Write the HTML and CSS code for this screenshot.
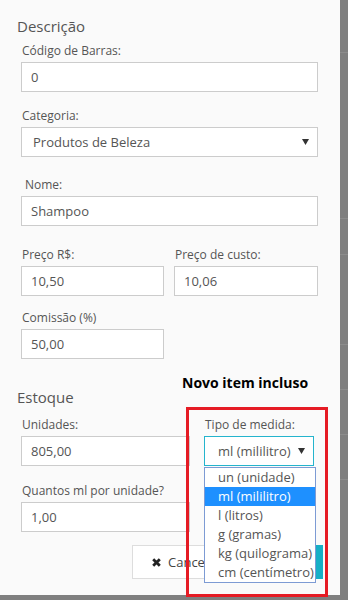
FILE: index.html
```html
<!DOCTYPE html>
<html lang="pt-BR">
  <head>
    <meta charset="UTF-8" />
    <meta name="viewport" content="width=device-width, initial-scale=1.0" />
    <title>Produto - Editar</title>
    <link rel="stylesheet" href="styles.css">
  </head>
  <body>
    <div class="screen">
      <div class="modal">
        <h4 class="section-title">Descrição</h4>

        <div class="field field-first">
          <label>Código de Barras:</label>
          <input class="input input-full" type="text" value="0" />
        </div>

        <div class="field">
          <label>Categoria:</label>
          <div class="select select-full">
            <span>Produtos de Beleza</span>
            <svg class="caret" width="7" height="6" viewBox="0 0 7 6"><path d="M0 0h7L3.5 6z" fill="#333"/></svg>
          </div>
        </div>

        <div class="field field-nome">
          <label class="label-indent">Nome:</label>
          <input class="input input-full" type="text" value="Shampoo" />
        </div>

        <div class="field field-precos">
          <div class="row-half">
            <div>
              <label>Preço R$:</label>
              <input class="input" type="text" value="10,50" />
            </div>
            <div>
              <label>Preço de custo:</label>
              <input class="input" type="text" value="10,06" />
            </div>
          </div>
        </div>

        <div class="field field-comissao">
          <div class="row-half">
            <div>
              <label>Comissão (%)</label>
              <input class="input" type="text" value="50,00" />
            </div>
          </div>
        </div>

        <h4 class="section-title section-estoque">Estoque</h4>

        <div class="field field-first field-estoque">
          <div class="row-stock">
            <div>
              <label>Unidades:</label>
              <input class="input" type="text" value="805,00" />
            </div>
            <div>
              <label>Tipo de medida:</label>
              <div class="select select-focus">
                <span>ml (mililitro)</span>
                <svg class="caret" width="7" height="6" viewBox="0 0 7 6"><path d="M0 0h7L3.5 6z" fill="#333"/></svg>
              </div>
            </div>
          </div>
        </div>

        <div class="field field-quantos">
          <div class="row-stock">
            <div>
              <label>Quantos ml por unidade?</label>
              <input class="input" type="text" value="1,00" />
            </div>
          </div>
        </div>

        <div class="actions">
          <button class="btn btn-cancel">
            <svg class="btn-icon" width="9" height="9" viewBox="0 0 9 9"><path d="M1.2 1.2l6.6 6.6M7.8 1.2L1.2 7.8" stroke="#222" stroke-width="2.8" stroke-linecap="butt"/></svg>
            <span>Cancelar</span>
          </button>
          <!-- texto do botão fica escondido atrás da lista aberta -->
          <button class="btn btn-save" title="Salvar"></button>
        </div>
      </div>

      <div class="backdrop">
        <div class="bd-row" style="height: 53px"></div>
        <div class="bd-row" style="height: 166px"></div>
        <div class="bd-row" style="height: 36px"></div>
        <div class="bd-row" style="height: 90px"></div>
        <div class="bd-row" style="height: 45px"></div>
        <div class="bd-row" style="height: 45px"></div>
        <div class="bd-row" style="height: 45px"></div>
      </div>
    </div>

    <!-- anotação do print -->
    <div class="note">Novo item incluso</div>
    <div class="note-box"></div>

    <ul class="dropdown">
      <li>un (unidade)</li>
      <li class="selected">ml (mililitro)</li>
      <li>l (litros)</li>
      <li>g (gramas)</li>
      <li>kg (quilograma)</li>
      <li>cm (centímetro)</li>
    </ul>
  </body>
</html>
```

FILE: styles.css
```css
body {
  margin: 0;
  padding: 0;
  font-family: "Open Sans", "Liberation Sans", sans-serif;
  background-color: #7f7f7f;
  color: #555;
  height: 600px;
  overflow: hidden;
}

.screen {
  display: flex;
}

.modal {
  width: 340px;
  height: 595px;
  background-color: #fafafa;
  padding: 16px 17px 0;
  box-sizing: border-box;
}

.section-title {
  margin: 0;
  font-size: 15px;
  line-height: 20px;
  font-weight: normal;
  color: #555;
}

.section-estoque {
  margin-top: 28px;
}

.field {
  padding-left: 4px;
  margin-top: 15px;
}

.field-first {
  margin-top: 6px;
}

.field-nome {
  margin-top: 19px;
}

.field-precos {
  margin-top: 20px;
}

.field-comissao {
  margin-top: 13px;
}

.field-estoque {
  margin-top: 9px;
}

.field-quantos {
  margin-top: 16px;
}

.field label {
  display: block;
  font-size: 12px;
  line-height: 17px;
  padding-left: 1px;
  margin-bottom: 3px;
  color: #555;
}

.field .label-indent {
  padding-left: 4px;
}

.input,
.select {
  display: block;
  width: 100%;
  height: 30px;
  box-sizing: border-box;
  border: 1px solid #ccc;
  background: white;
  font-family: inherit;
  font-size: 13px;
  color: #555;
  padding: 0 9px;
  margin: 0;
  outline: none;
}

.input-full,
.select-full {
  width: 297px;
}

.select {
  display: flex;
  align-items: center;
  justify-content: space-between;
  padding: 0 8px 0 11px;
}

.select-focus {
  border-color: #25b4cd;
  padding-left: 13px;
}

.caret {
  display: block;
}

.row-half {
  display: grid;
  grid-template-columns: 143px 144px;
  column-gap: 10px;
}

.row-stock {
  display: grid;
  grid-template-columns: 169px 110px;
  column-gap: 14px;
}

.actions {
  display: flex;
  justify-content: flex-end;
  gap: 4px;
  margin-top: 13px;
}

.btn {
  height: 34px;
  font-family: inherit;
  font-size: 13px;
  border: 1px solid #ddd;
  display: flex;
  align-items: center;
  gap: 7px;
  padding: 0 18px;
  overflow: hidden;
  white-space: nowrap;
}

.btn-icon {
  flex-shrink: 0;
}

.btn-cancel {
  width: 105px;
  background: white;
  color: #444;
  padding-left: 19px;
}

.btn-save {
  width: 82px;
  background: #17afc6;
  border-color: #17afc6;
}

.backdrop {
  width: 8px;
}

.bd-row {
  border-bottom: 1px solid #8c8c8c;
  box-sizing: border-box;
}

/* annotation */
.note {
  position: absolute;
  left: 182px;
  top: 373px;
  font-size: 14px;
  line-height: 19px;
  font-weight: bold;
  color: #000;
}

.note-box {
  position: absolute;
  left: 186px;
  top: 407px;
  width: 142px;
  height: 190px;
  box-sizing: border-box;
  border: 3px solid #e51b24;
}

.dropdown {
  position: absolute;
  left: 204px;
  top: 467px;
  width: 112px;
  margin: 0;
  padding: 0;
  list-style: none;
  background: white;
  border: 1px solid #7d9bd4;
  box-sizing: border-box;
}

.dropdown li {
  height: 19px;
  line-height: 19px;
  font-size: 13px;
  color: #555;
  padding-left: 13px;
  white-space: nowrap;
}

.dropdown li.selected {
  background: #1e90ff;
  color: white;
}
```
